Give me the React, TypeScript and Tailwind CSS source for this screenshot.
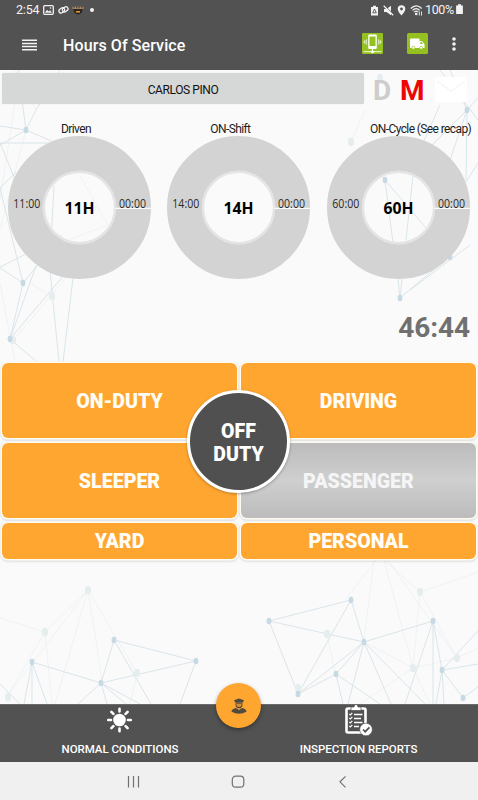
import React from 'react';

type Line = [number, number, number, number];
type Dot = [number, number];

const LINES: Line[] = [
  // top left mesh
  [26, 130, 18, 70], [26, 130, 36, 110], [36, 110, 60, 70], [26, 130, 0, 126], [26, 130, 56, 143], [26, 130, 0, 145], [0, 143, 60, 143],
  [0, 143, 16, 182], [0, 188, 16, 172], [0, 188, 23, 283], [23, 283, 0, 268], [23, 283, 62, 235], [0, 267, 30, 252], [54, 186, 50, 260],
  [10, 339, 23, 283], [10, 339, 36, 266], [10, 339, 70, 268], [10, 339, 37, 362], [49, 260, 59, 362], [73, 278, 63, 362],
  // top right mesh
  [467, 110, 450, 70], [467, 110, 478, 98], [467, 110, 432, 145], [467, 110, 450, 160], [467, 110, 466, 180], [440, 70, 478, 120],
  [466, 182, 478, 163], [385, 180, 393, 243], [385, 180, 426, 228], [413, 176, 406, 240], [430, 176, 436, 205],
  [400, 298, 398, 279], [400, 298, 402, 279], [400, 298, 450, 256], [410, 290, 470, 245], [422, 145, 440, 105],
  // bottom left mesh
  [32, 662, 101, 683], [101, 683, 114, 640], [114, 640, 196, 661], [196, 661, 101, 683], [32, 662, 24, 704], [32, 662, 32, 704],
  [32, 662, 47, 704], [101, 683, 78, 704], [101, 683, 107, 704], [101, 683, 126, 704], [101, 683, 140, 704], [114, 640, 151, 704],
  [196, 661, 180, 704], [0, 684, 20, 704],
  // bottom right mesh
  [269, 621, 351, 600], [269, 621, 364, 642], [351, 600, 364, 642], [351, 600, 298, 694], [269, 621, 298, 694], [364, 642, 298, 694],
  [364, 642, 433, 621], [364, 642, 336, 674], [336, 674, 298, 694], [336, 674, 343, 704], [336, 674, 380, 704], [364, 642, 348, 704],
  [364, 642, 391, 704], [364, 642, 425, 704], [433, 621, 405, 704], [433, 621, 433, 704], [433, 621, 442, 670], [442, 670, 478, 631],
  [442, 670, 478, 664], [442, 670, 436, 704], [442, 670, 444, 704], [442, 670, 463, 698], [463, 698, 478, 687],
];

const FAINT_LINES: Line[] = [
  [0, 618, 45, 632], [45, 632, 88, 590], [88, 590, 8, 695], [88, 590, 55, 704], [88, 590, 102, 680], [88, 590, 137, 673],
  [45, 632, 52, 704], [45, 632, 8, 695], [137, 673, 130, 704], [20, 70, 0, 200], [26, 130, 0, 230], [15, 70, 36, 110],
  [376, 560, 345, 600], [374, 560, 364, 640], [384, 560, 413, 668], [384, 560, 420, 592], [388, 560, 457, 658], [420, 592, 478, 572],
  [420, 592, 413, 668], [420, 592, 457, 658], [413, 668, 360, 704], [413, 668, 457, 658], [364, 642, 413, 668], [457, 658, 478, 648],
  [413, 668, 430, 704], [327, 634, 335, 672], [351, 142, 365, 110], [0, 283, 15, 362], [28, 282, 51, 296], [12, 342, 68, 275], [80, 176, 108, 225], [68, 240, 108, 225],
];

const DOTS: Dot[] = [
  [26, 130], [23, 283], [10, 339], [467, 110], [385, 180], [400, 298], [450, 257], [32, 662], [101, 683], [114, 640], [196, 661],
  [269, 621], [351, 600], [364, 642], [433, 621], [336, 674], [298, 694], [442, 670], [463, 698],
];

const FAINT_DOTS: Dot[] = [
  [88, 590], [45, 632], [137, 673], [8, 697], [327, 634], [420, 592], [413, 668], [457, 658], [351, 142], [52, 296], [380, 78], [13, 340], [298, 688],
];

const Mesh: React.FC = () => (
  <svg className="absolute inset-0 -z-10" width="478" height="800" viewBox="0 0 478 800" fill="none">
    <g stroke="#ecf0f1" strokeWidth="0.8">
      {FAINT_LINES.map(([a, b, c, d], i) => <line key={i} x1={a} y1={b} x2={c} y2={d} />)}
    </g>
    <g stroke="#d2dfe6" strokeWidth="0.8">
      {LINES.map(([a, b, c, d], i) => <line key={i} x1={a} y1={b} x2={c} y2={d} />)}
    </g>
    {FAINT_DOTS.map(([x, y], i) => <ellipse key={i} cx={x} cy={y} rx="3" ry="4.3" fill="#e6edef" />)}
    {DOTS.map(([x, y], i) => <ellipse key={i} cx={x} cy={y} rx="2.4" ry="3.3" fill="#c7d9e3" />)}
  </svg>
);

const StatusBar: React.FC = () => (
  <div className="h-5 flex items-center justify-between pl-4 pr-[15px] text-[12.5px] leading-5 text-[#f2f2f2]">
    <div className="flex items-center">
      <span className="w-[27px] tracking-[-0.2px]">2:54</span>
      <svg width="11" height="10" viewBox="0 0 11 10">
        <rect x="0.7" y="0.7" width="9.6" height="8.6" rx="1" fill="none" stroke="#f2f2f2" strokeWidth="1.3" />
        <path d="M2 7.7l2-3 1.6 1.8 1.4-1.3 2 2.5z" fill="#f2f2f2" />
        <circle cx="7.5" cy="3" r="0.8" fill="#f2f2f2" />
      </svg>
      <svg className="ml-1" width="11" height="10" viewBox="0 0 11 10" fill="none" stroke="#f2f2f2" strokeWidth="1.3">
        <rect x="0.8" y="3.3" width="6" height="4.2" rx="2.1" transform="rotate(-38 3.8 5.4)" />
        <rect x="4.2" y="2.3" width="6" height="4.2" rx="2.1" transform="rotate(-38 7.2 4.4)" />
      </svg>
      <svg className="ml-[3px]" width="12" height="10" viewBox="0 0 12 10">
        <path d="M1 3.5h10L9.5 8 6 9.8 2.5 8z" fill="#2c2620" />
        <path d="M0.5 1.8h11v2.2H.5z" fill="#b08f6a" />
        <path d="M1.5 2.8h9" stroke="#4c3c2b" strokeDasharray="1.5 1" />
        <path d="M4 6h4v1.6H4z" fill="#d99632" />
      </svg>
      <span className="ml-[6px] size-1 rounded-full bg-[#f2f2f2]" />
    </div>
    <div className="flex items-center">
      <svg width="9" height="11" viewBox="0 0 9 11">
        <path d="M1 2h2V.8h3V2h2v8.6H1z" fill="#f2f2f2" />
        <path d="M4.5 4l1.8 3.8H2.7z" fill="none" stroke="#525252" strokeWidth="0.9" />
      </svg>
      <svg className="ml-1" width="11" height="11" viewBox="0 0 11 11">
        <path d="M1 4h2.500L8 .8v9.400L3.500 7H1z" fill="#f2f2f2" />
        <path d="M1.500 .3l9 9" stroke="#525252" strokeWidth="1" />
        <path d="M.7 .8l9.500 9.400" stroke="#f2f2f2" strokeWidth="1.300" />
      </svg>
      <svg className="ml-[3px]" width="9" height="11" viewBox="0 0 9 11">
        <path d="M4.500.3a3.800 3.800 0 0 1 3.800 3.800c0 2.500-3.800 6.500-3.800 6.500S.7 6.600.7 4.100A3.800 3.800 0 0 1 4.500.3z" fill="#f2f2f2" />
        <circle cx="4.500" cy="4" r="1.400" fill="#525252" />
      </svg>
      <svg className="ml-1" width="13" height="11" viewBox="0 0 13 11" fill="none" stroke="#f2f2f2" strokeWidth="1.200">
        <path d="M.8 3.500C4-.1 8.500-.1 11.600 3.500M2.500 5.300c2.200-2.300 5-2.300 7.200 0M4.200 7.200c1.300-1.300 2.700-1.300 4 0" />
        <circle cx="6.200" cy="9" r="0.700" fill="#f2f2f2" />
        <path d="M9.300 6.500v4M11.500 6.500v4" strokeWidth="0.900" />
      </svg>
      <span className="ml-[2px] w-[31px] tracking-[-0.4px]">100%</span>
      <svg className="-mt-[2px]" width="7" height="11" viewBox="0 0 7 11"><path d="M.1 1.500h1.900V.3h3v1.200h1.900v8.500H.1z" fill="#f2f2f2" /></svg>
    </div>
  </div>
);

const AppBar: React.FC = () => (
  <div className="h-[50px] flex items-center pl-[22px] pr-[22px] text-white">
    <svg width="15" height="12" viewBox="0 0 15 12" stroke="#f2f2f2">
      <path d="M0 1.200h15M0 4.400h15M0 7.600h15M0 10.800h15" strokeWidth="1.500" />
    </svg>
    <h1 className="ml-[26px] mt-[2px] text-[16px] font-medium tracking-[0.1px]">Hours Of Service</h1>
    <svg className="ml-auto mt-[-3px]" width="21" height="21" viewBox="0 0 21 21" fill="none" stroke="#fff">
      <rect width="21" height="21" rx="1" fill="#94c11f" stroke="none" />
      <rect x="6.200" y="1.500" width="8.600" height="14.500" rx="1.200" fill="#fff" stroke="none" />
      <rect x="7.500" y="3.500" width="6" height="9.500" fill="#94c11f" stroke="none" />
      <path d="M4.500 6.500q-1 2.500 0 5M2.500 7.500q-.7 1.500 0 3M16.500 6.500q1 2.500 0 5M18.500 7.500q.7 1.500 0 3M1.500 18.700h18M10.500 16v3" strokeWidth="0.900" />
      <circle cx="10.500" cy="18.700" r="1.500" fill="#fff" stroke="none" />
    </svg>
    <svg className="ml-6 mt-[-3px]" width="21" height="21" viewBox="0 0 21 21">
      <rect width="21" height="21" rx="1.500" fill="#94c11f" />
      <path d="M4 5.500h8.500v2.500h2.300l2.700 3v4H3V6.500q0-1 1-1z" fill="#fff" />
      <path d="M13.400 8.900h1.200l1.500 2h-2.700z" fill="#94c11f" />
      <circle cx="6.300" cy="14.800" r="1.500" fill="#fff" stroke="#94c11f" strokeWidth="0.700" />
      <circle cx="14.200" cy="14.800" r="1.500" fill="#fff" stroke="#94c11f" strokeWidth="0.700" />
    </svg>
    <svg className="ml-6 mt-[-2px]" width="4" height="14" viewBox="0 0 4 14" fill="#f2f2f2">
      <circle cx="2" cy="2" r="1.800" />
      <circle cx="2" cy="7" r="1.800" />
      <circle cx="2" cy="12" r="1.800" />
    </svg>
  </div>
);

interface DialProps {
  title: string;
  left: string;
  total: string;
  titleClass: string;
}

const Dial: React.FC<DialProps> = ({ title, left, total, titleClass }) => (
  <div className="w-[143px]">
    <div className={`h-[14px] text-[12px] leading-[14px] tracking-[-0.6px] text-[#1c1c1c] whitespace-nowrap ${titleClass}`}>{title}</div>
    <svg width="143" height="143" viewBox="0 0 143 143">
      <circle cx="71.500" cy="71.500" r="53.500" fill="none" stroke="#d3d3d3" strokeWidth="36" />
      <circle cx="71.500" cy="71.500" r="35.700" fill="none" stroke="#e4e4e4" strokeWidth="2.500" />
      <path d="M107 72.300h36" stroke="#fafafa" strokeWidth="1.200" />
      <g fontFamily="'Open Sans', 'Noto Sans', sans-serif" fill="#2b2b2b">
        <text x="5.300" y="71.500" fontSize="12" textLength="27" lengthAdjust="spacingAndGlyphs">{left}</text>
        <text x="111" y="71.500" fontSize="12" textLength="27" lengthAdjust="spacingAndGlyphs">00:00</text>
        <text x="71.500" y="78" fontSize="16" fontWeight="700" textAnchor="middle" textLength="30" lengthAdjust="spacingAndGlyphs" fill="#000">{total}</text>
      </g>
    </svg>
  </div>
);

interface DutyButtonProps {
  label: string;
  className: string;
}

const DutyButton: React.FC<DutyButtonProps> = ({ label, className }) => (
  <button className={`rounded-[6px] pt-[2px] text-[19.6px] leading-6 font-black ring-[1.5px] ring-[#fffbf0] shadow-[0_1px_2px_2px_rgba(0,0,0,0.1)] ${className}`}>
    {label}
  </button>
);

const App: React.FC = () => {
  return (
    <div className="relative isolate w-[478px] h-[800px] flex flex-col overflow-hidden bg-[#fafafa] font-[Roboto,sans-serif]">
      <Mesh />

      <header className="h-[70px] bg-[#525252]">
        <StatusBar />
        <AppBar />
      </header>

      {/* Driver name and message shortcuts */}
      <div className="h-[35px] pt-[3px] pl-[2px] flex">
        <div className="w-[362px] h-[31px] rounded-[2px] bg-[#d6d8d7] shadow-[0_0_1px_#ccc] flex items-center justify-center pt-[2px] text-[12px] tracking-[-0.4px] text-[#111]">
          CARLOS PINO
        </div>
        <span className="ml-[9px] w-[27px] text-[28px] leading-[36px] font-bold text-[#cdcdcd]">D</span>
        <span className="w-[33px] text-[28px] leading-[36px] font-bold text-[#ee0505]">M</span>
        <svg className="mt-[4px] ml-[2px]" width="32" height="25" viewBox="0 0 32 25">
          <path d="M0 0h32v25H0z" fill="#fff" />
          <path d="M2 4l14 10L30 4" fill="none" stroke="#f4f6f7" strokeWidth="1.500" />
        </svg>
      </div>

      {/* Hour dials */}
      <div className="h-[175px] pt-[17px] pl-2 flex gap-[16.3px]">
        <Dial title="Driven" left="11:00" total="11H" titleClass="pl-[53px]" />
        <Dial title="ON-Shift" left="14:00" total="14H" titleClass="pl-[43px]" />
        <Dial title="ON-Cycle (See recap)" left="60:00" total="60H" titleClass="pl-[43.5px]" />
      </div>

      <div className="h-[83px] pt-[31px] pr-2 text-right text-[28px] leading-[33px] font-bold text-[#707070] tracking-[-0.1px]">46:44</div>

      {/* Duty status */}
      <div className="relative h-[196px] px-[2px] grid grid-cols-2 grid-rows-[75px_75px_36px] gap-x-[4px] gap-y-[5px]">
        <DutyButton label="ON-DUTY" className="bg-[#ffa630] text-[#fffdf5]" />
        <DutyButton label="DRIVING" className="bg-[#ffa630] text-[#fffdf5]" />
        <DutyButton label="SLEEPER" className="bg-[#ffa630] text-[#fffdf5]" />
        <DutyButton label="PASSENGER" className="bg-linear-to-b from-[#bcbcbc] via-[#cfcfcf] to-[#bcbcbc] text-[#f5f5f5]" />
        <DutyButton label="YARD" className="bg-[#ffa630] text-[#fffdf5]" />
        <DutyButton label="PERSONAL" className="bg-[#ffa630] text-[#fffdf5]" />
        <button className="absolute left-[187px] top-[27px] size-[103px] rounded-full border-[3px] border-white bg-[#505050] pt-[3px] text-[19.5px] leading-[23px] font-black text-white shadow-[0_1px_3px_rgba(0,0,0,0.3)]">
          OFF<br />DUTY
        </button>
      </div>

      {/* Bottom bar */}
      <footer className="relative mt-auto h-[58px] grid grid-cols-2 bg-[#525252] border-t border-[#6b6b6b] text-[11.500px] font-medium tracking-[-0.05px] text-white">
        <div className="flex flex-col items-center">
          <svg className="mt-[2px]" width="26" height="26" viewBox="0 0 26 26" fill="#fff" stroke="#fff" strokeWidth="2.600" strokeLinecap="round">
            <circle cx="12.500" cy="13" r="6.300" stroke="none" />
            <path d="M12.500 1.700v2.800M12.500 21.500v2.800M1.200 13H4M21 13h2.800M4.400 4.900l2 2M18.600 19.100l2 2M4.400 21.100l2-2M18.600 6.900l2-2" />
          </svg>
          <span className="mt-[9px] ml-px leading-[14px]">NORMAL CONDITIONS</span>
        </div>
        <div className="flex flex-col items-center">
          <svg className="-mt-px" width="28" height="33" viewBox="0 0 28 33">
            <rect x="1.500" y="4.500" width="19" height="24" rx="1.500" fill="none" stroke="#fff" strokeWidth="2.600" />
            <path d="M6 6.500V3h3q0-2.500 2-2.500T13 3h3v3.500z" fill="#fff" stroke="#525252" strokeWidth="0.700" />
            <path d="M4.300 10l1 1 2-2M4.300 14l1 1 2-2M4.300 18l1 1 2-2M4.300 22l1 1 2-2" fill="none" stroke="#fff" strokeWidth="1.100" />
            <path d="M9 10.500h8.500M9 14.500h7M9 18.500h8.500M9 22.500h5" stroke="#fff" strokeWidth="1.300" />
            <circle cx="21" cy="25.500" r="6.300" fill="#fff" stroke="#525252" strokeWidth="0.600" />
            <path d="M18 25.500l2.200 2.200 4.200-4.300" fill="none" stroke="#525252" strokeWidth="1.700" />
          </svg>
          <span className="mt-[5px] leading-[14px]">INSPECTION REPORTS</span>
        </div>
        <button className="absolute left-[216px] top-[-22px] size-[45px] rounded-full bg-[#ffa630] shadow-[0_2px_4px_rgba(0,0,0,0.35)] flex items-center justify-center">
          <svg width="16" height="16" viewBox="0 0 16 16" fill="#514a40">
            <path d="M3 2.200L8 .5l5 1.700-1.300 2.600H4.300z" />
            <path d="M4.500 5.300h7v1.600Q11 10.300 8 10.300T4.500 6.900z" />
            <path d="M5.300 6h5.400Q10.500 9 8 9T5.300 6z" fill="#d78f31" />
            <path d="M.4 13.500Q1 10.500 5 10l3 2 3-2q4 .500 4.600 3.500Q12 15.800 8 15.800T.4 13.500z" />
          </svg>
        </button>
      </footer>

      {/* Android navigation */}
      <nav className="h-[38px] shrink-0 bg-[#f0f0f0]">
        <svg width="478" height="38" viewBox="0 0 478 38" fill="none" stroke="#707070" strokeWidth="1.200">
          <path d="M128.500 14v11.500M133.500 14v11.500M138.500 14v11.500" />
          <rect x="232.300" y="14.200" width="11.500" height="11" rx="3.500" />
          <path d="M345.500 14.300l-5.500 5.500 5.500 5.500" />
        </svg>
      </nav>
    </div>
  );
};

export default App;
